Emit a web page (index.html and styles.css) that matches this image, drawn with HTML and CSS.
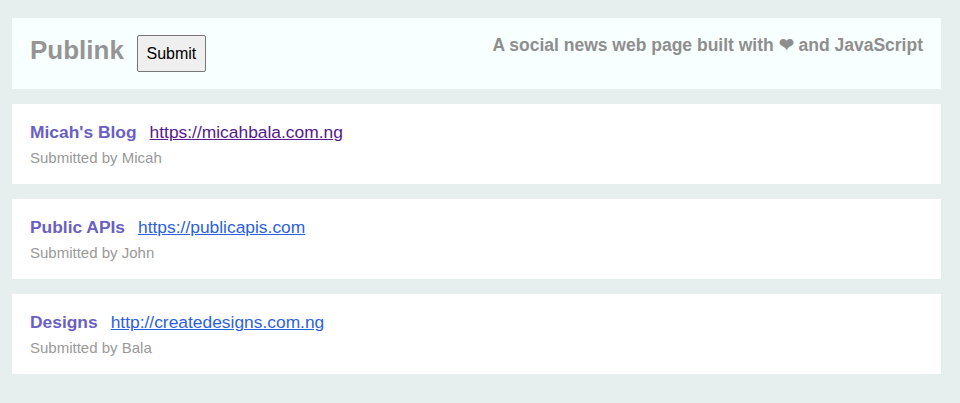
FILE: index.html
```html
<!DOCTYPE html>
<html lang="en">
<head>
<meta charset="utf-8">
<title>Publink</title>
<link rel="stylesheet" href="styles.css">
</head>
<body>
<main class="page">
  <header class="header">
    <div class="brand">
      <h1 class="logo">Publink</h1>
      <button class="submit-btn" type="button">Submit</button>
    </div>
    <p class="tagline">A social news web page built with <span class="heart">❤</span> and JavaScript</p>
  </header>
  <article class="card">
    <div class="card-top">
      <span class="card-title">Micah's Blog</span>
      <a class="card-link visited" href="#">https://micahbala.com.ng</a>
    </div>
    <p class="card-meta">Submitted by Micah</p>
  </article>
  <article class="card">
    <div class="card-top">
      <span class="card-title">Public APIs</span>
      <a class="card-link" href="#">https://publicapis.com</a>
    </div>
    <p class="card-meta">Submitted by John</p>
  </article>
  <article class="card">
    <div class="card-top">
      <span class="card-title">Designs</span>
      <a class="card-link" href="#">http://createdesigns.com.ng</a>
    </div>
    <p class="card-meta">Submitted by Bala</p>
  </article>
</main>
</body>
</html>
```
FILE: styles.css
```css
html, body {
  margin: 0;
  background: #e6efee;
  font-family: "Liberation Sans", Arial, sans-serif;
}
.page {
  padding: 18px 19px 30px 12px;
  display: flex;
  flex-direction: column;
  gap: 15px;
}
.header {
  background: #f8ffff;
  height: 71px;
  box-sizing: border-box;
  padding: 0 18px 0 18px;
  display: flex;
  justify-content: space-between;
  align-items: flex-start;
}
.brand {
  display: flex;
  align-items: baseline;
  gap: 13px;
  margin-top: 17px;
}
.logo {
  margin: 0;
  font-size: 26px;
  font-weight: bold;
  color: #959595;
  line-height: 30px;
}
.submit-btn {
  font-family: "Liberation Sans", Arial, sans-serif;
  font-size: 16px;
  color: #000;
  background: #efefef;
  border: 1px solid #767676;
  border-radius: 2px;
  padding: 9px 8px;
  width: 69px;
  line-height: 17px;
}
.tagline {
  margin: 17px 0 0;
  font-size: 17.5px;
  font-weight: bold;
  color: #8e8e8e;
  line-height: 20px;
}
.heart {
  color: #8e8e8e;
}
.card {
  background: #fff;
  height: 80px;
  box-sizing: border-box;
  padding: 18px 18px 0;
}
.card-top {
  display: flex;
  align-items: baseline;
  gap: 13px;
  line-height: 20px;
}
.card-title {
  font-size: 17.4px;
  font-weight: bold;
  color: #6a60c4;
}
.card-link {
  font-size: 17.4px;
  color: #2b61e0;
}
.card-link.visited {
  color: #551a8b;
}
.card-meta {
  margin: 7px 0 0;
  font-size: 15px;
  line-height: 17px;
  color: #999;
}
```
